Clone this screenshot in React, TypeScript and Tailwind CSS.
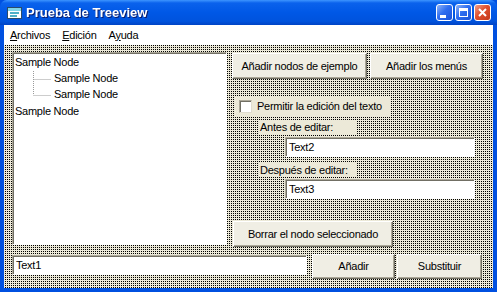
import React from "react";

const font = "font-['Liberation_Sans',Arial,sans-serif]";

// XP "classic" bevels
const raised =
  "border border-t-white border-l-white border-r-[#716f64] border-b-[#716f64] shadow-[inset_-1px_-1px_0_#aca899] bg-[#f0eee4]";
const sunken =
  "border border-t-[#aca899] border-l-[#aca899] border-r-white border-b-white shadow-[inset_1px_1px_0_#716f64] bg-white";

function Btn({ label, className }: { label: string; className: string }) {
  return (
    <button className={`${raised} ${className} flex items-center justify-center text-[11px] tracking-[-0.25px] text-black`}>
      {label}
    </button>
  );
}

function TextBox({ value, className }: { value: string; className: string }) {
  return (
    <div className={`${sunken} ${className} flex items-center pl-[3px] text-[11px] text-black`}>{value}</div>
  );
}

function TitleButton({ kind }: { kind: "min" | "max" | "close" }) {
  const bg =
    kind === "close"
      ? "bg-[linear-gradient(135deg,#f0a08a_0%,#e0502e_45%,#c4381a_100%)]"
      : "bg-[linear-gradient(135deg,#8fb4f8_0%,#2f6ef0_45%,#1a52d8_100%)]";
  return (
    <div className={`w-[17px] h-[17px] rounded-[3px] border border-white ${bg} flex items-center justify-center`}>
      {kind === "min" && <div className="w-[6px] h-[3px] bg-white mt-[7px] mr-[3px]" />}
      {kind === "max" && <div className="w-[9px] h-[9px] border border-white border-t-[3px]" />}
      {kind === "close" && (
        <svg width="9" height="9" viewBox="0 0 9 9">
          <path d="M1 1 L8 8 M8 1 L1 8" stroke="white" strokeWidth="2" />
        </svg>
      )}
    </div>
  );
}

export default function App() {
  return (
    <div className={`${font} w-[497px] h-[292px] flex flex-col bg-[#0050e0] overflow-hidden`}>
      {/* Title bar */}
      <div className="h-[25px] shrink-0 flex items-center pl-[7px] pr-[6px] rounded-t-[7px] bg-[linear-gradient(to_bottom,#3d95ff_0%,#0a62ec_12%,#0058e6_50%,#0053dd_85%,#0043c4_100%)]">
        <svg width="16" height="14" viewBox="0 0 16 14" className="mr-[3px]">
          <rect x="0.5" y="1.5" width="14" height="11" fill="#ffffff" stroke="#2a4a6a" />
          <rect x="1" y="2" width="13" height="3" fill="#7fd4e8" />
          <rect x="3" y="6" width="9" height="2" fill="#4fb0c8" />
          <rect x="3" y="9" width="7" height="2" fill="#4fb0c8" />
        </svg>
        <span className="text-white font-bold text-[13px] drop-shadow-[1px_1px_0_#0a1e6e]">Prueba de Treeview</span>
        <div className="ml-auto flex gap-[2px]">
          <TitleButton kind="min" />
          <TitleButton kind="max" />
          <TitleButton kind="close" />
        </div>
      </div>

      <div className="flex-1 flex flex-col px-[4px] pb-[4px]">
        {/* Menu */}
        <div className="h-[20px] shrink-0 bg-white flex items-center text-[11px] tracking-[-0.25px] text-black">
          <span className="ml-[6px]">
            <span className="underline">A</span>rchivos
          </span>
          <span className="ml-[12px]">
            <span className="underline">E</span>dición
          </span>
          <span className="ml-[12px]">
            A<span className="underline">y</span>uda
          </span>
        </div>

        {/* Client area with dotted background */}
        <div className="flex-1 flex flex-col pt-[7px] pl-[8px] text-[11px] tracking-[-0.25px] text-black bg-[conic-gradient(#000_25%,#ece9d8_0)] bg-size-[2px_2px]">
          <div className="flex h-[195px]">
            {/* Tree view */}
            <div className={`${sunken} w-[215px] h-[193px] pt-[1px] pl-[2px] leading-[16px]`}>
              <div>Sample Node</div>
              <div className="flex">
                <svg width="40" height="33" viewBox="0 0 40 33" className="-ml-[2px]">
                  <path d="M20.5 1 V25 M20.5 9.5 H38 M20.5 25.5 H38" stroke="#9a9a9a" strokeDasharray="1 1" fill="none" />
                </svg>
                <div className="ml-[1px]">
                  <div className="h-[16px]">Sample Node</div>
                  <div className="h-[16px]">Sample Node</div>
                </div>
              </div>
              <div>Sample Node</div>
            </div>

            {/* Right controls */}
            <div className="ml-[5px] flex flex-col">
              <div className="mt-[1px] flex gap-[3px]">
                <Btn label="Añadir nodos de ejemplo" className="w-[135px] h-[26px]" />
                <Btn label="Añadir los menús" className="w-[113px] h-[26px]" />
              </div>
              <div className="mt-[18px] ml-[3px] w-[155px] h-[19px] bg-[#ece9d8] flex items-center">
                <div className="ml-[4px] w-[13px] h-[13px] bg-white border border-t-[#aca899] border-l-[#aca899] border-r-[#e0ddd0] border-b-[#e0ddd0] shadow-[inset_1px_1px_0_#716f64]" />
                <span className="ml-[5px]">Permitir la edición del texto</span>
              </div>
              <div className="mt-[4px] ml-[26px] w-[99px] h-[14px] bg-[#ece9d8] flex items-center pl-[2px]">
                Antes de editar:
              </div>
              <TextBox value="Text2" className="mt-[3px] ml-[53px] w-[190px] h-[20px]" />
              <div className="mt-[6px] ml-[26px] w-[99px] h-[14px] bg-[#ece9d8] flex items-center pl-[2px]">
                Después de editar:
              </div>
              <TextBox value="Text3" className="mt-[2px] ml-[53px] w-[190px] h-[20px]" />
              <Btn label="Borrar el nodo seleccionado" className="mt-[22px] ml-[1px] w-[160px] h-[26px]" />
            </div>
          </div>

          {/* Bottom row */}
          <div className="mt-[7px] flex items-start">
            <TextBox value="Text1" className="mt-[1px] w-[295px] h-[20px]" />
            <Btn label="Añadir" className="ml-[5px] w-[83px] h-[25px]" />
            <Btn label="Substituir" className="ml-[2px] w-[85px] h-[25px]" />
          </div>
        </div>
      </div>
    </div>
  );
}
